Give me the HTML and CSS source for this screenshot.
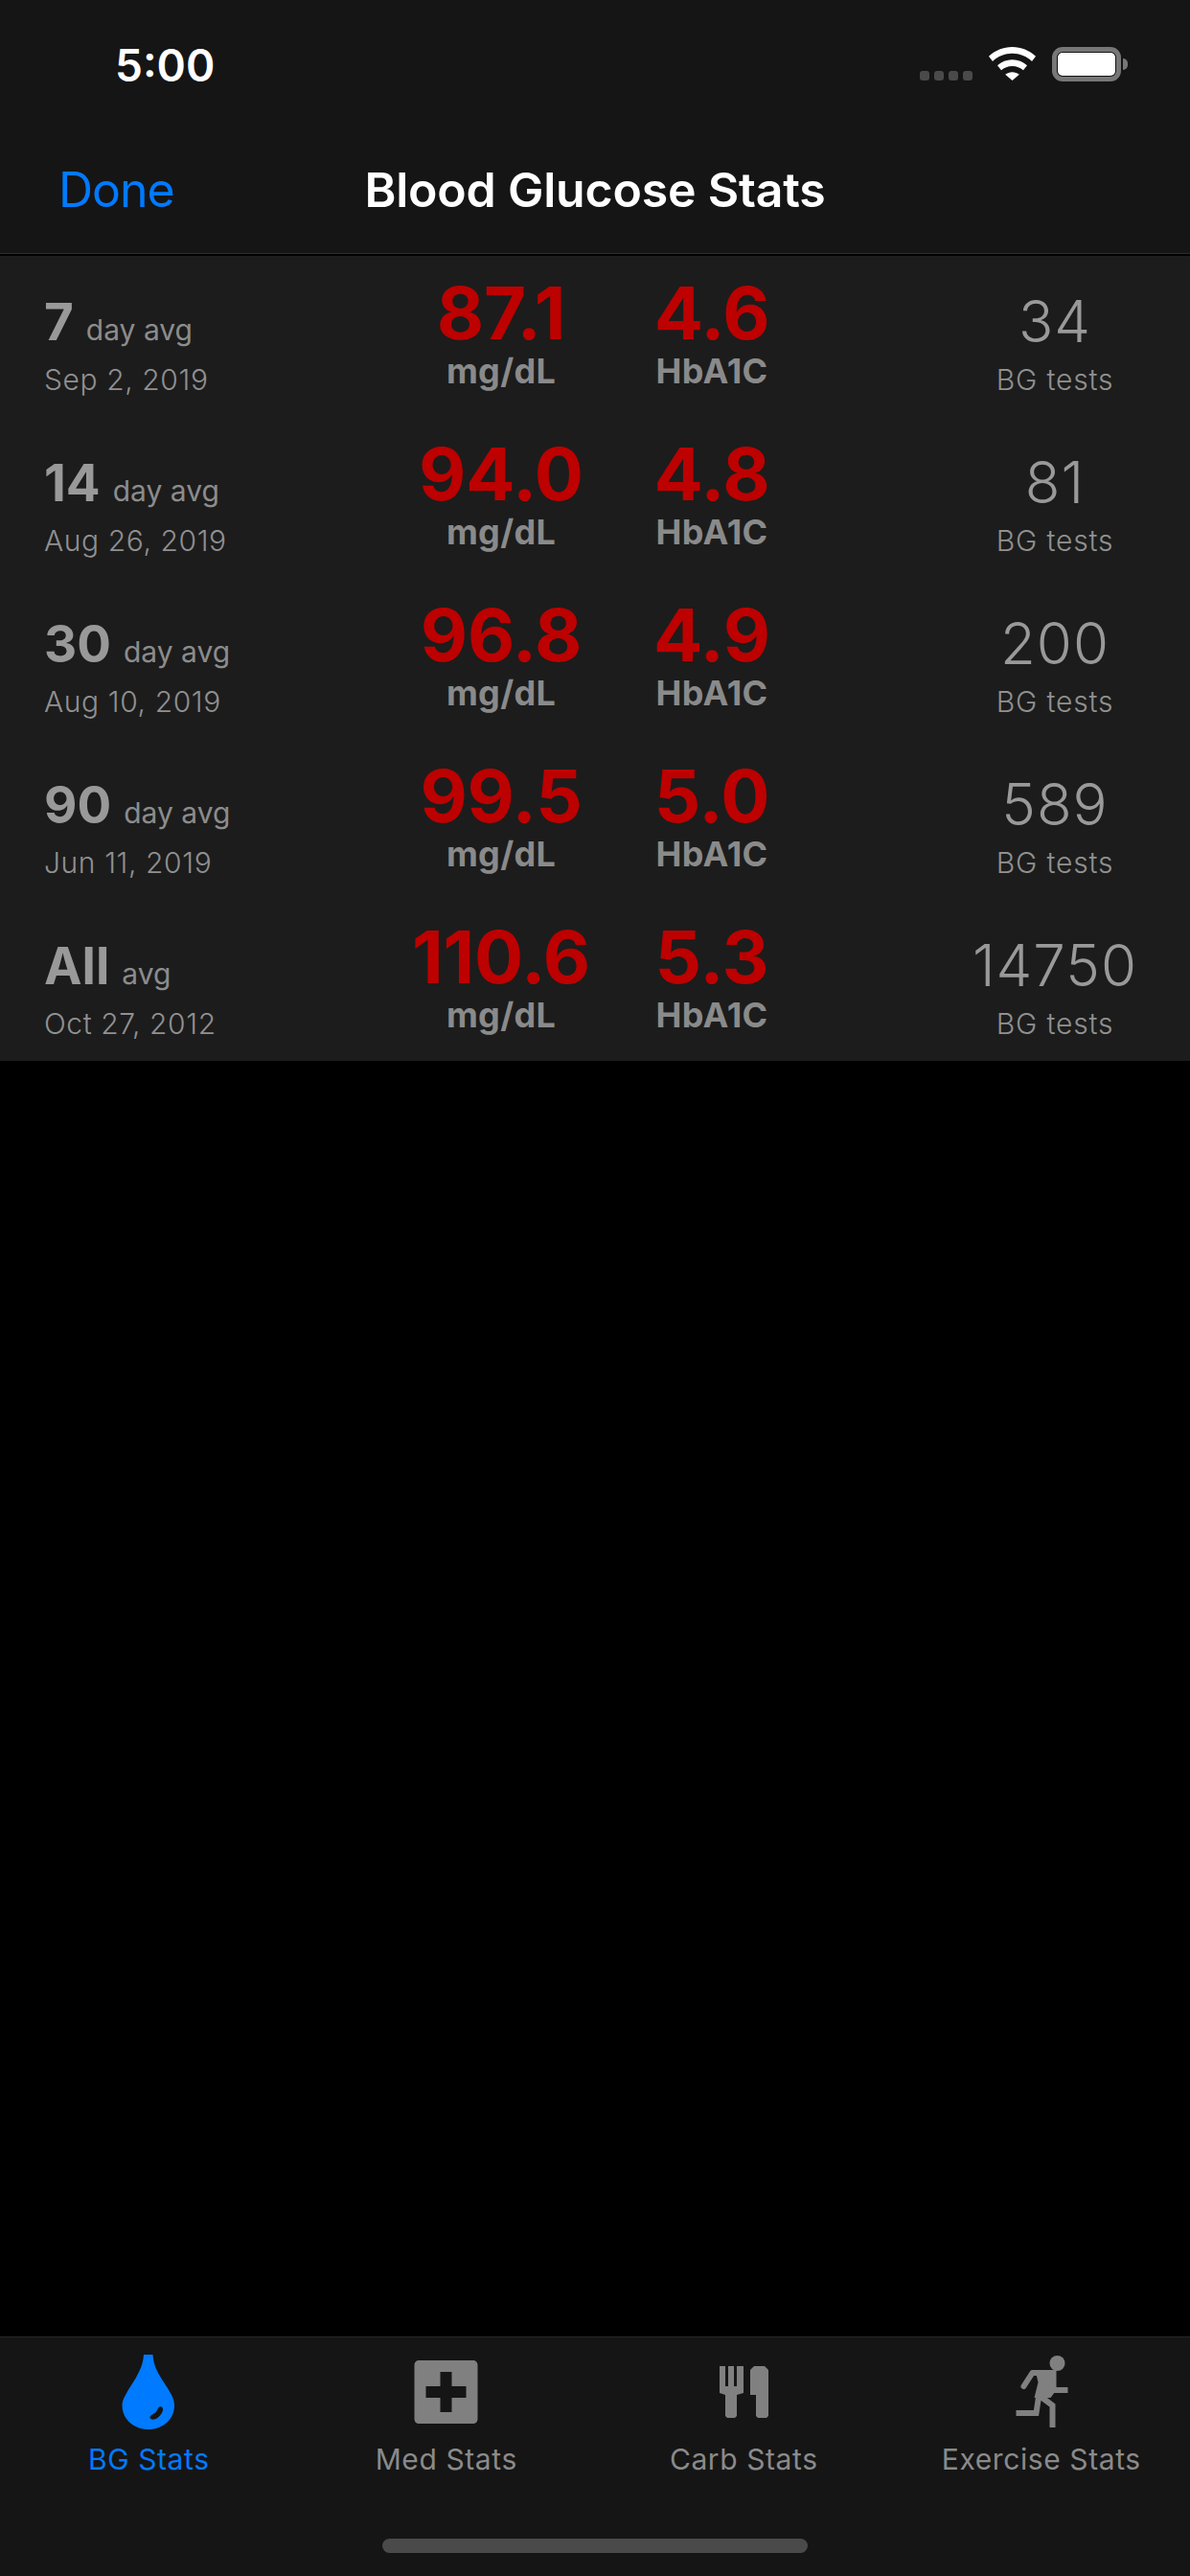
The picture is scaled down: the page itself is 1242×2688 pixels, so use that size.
FILE: index.html
```html
<!DOCTYPE html>
<html lang="en">
<head>
<meta charset="utf-8">
<title>Blood Glucose Stats</title>
<link rel="stylesheet" href="styles.css">
</head>
<body>
<div class="app">
  <header class="top">
    <div class="status">
      <span class="time">5:00</span>
      <div class="status-icons">
        <div class="dots"><i></i><i></i><i></i><i></i></div>
        <svg class="wifi" width="49" height="35" viewBox="0 0 49 35"><path fill="#fff" d="M24.5 0C33.8 0 42.3 3.6 49 9.7L45 14.9C39.5 9.9 32.3 6.8 24.5 6.8S9.500 9.900 4 14.900L0 9.700C6.700 3.600 15.200 0 24.500 0Z"/><path fill="#fff" d="M24.500 13.300C30.400 13.300 35.800 15.500 40 19.300L36 24.300C33 21.500 29 19.900 24.500 19.900S16 21.500 13 24.300L9 19.300C13.200 15.500 18.600 13.300 24.500 13.300Z"/><path fill="#fff" d="M24.500 26.300C27.200 26.300 29.700 27.200 31.800 28.700L24.500 35 17.200 28.700C19.300 27.200 21.800 26.300 24.500 26.300Z"/></svg>
        <div class="battery"><div class="battery-body"><div class="battery-fill"></div></div><div class="battery-cap"></div></div>
      </div>
    </div>
    <nav class="nav">
      <span class="done">Done</span>
      <span class="title">Blood Glucose Stats</span>
    </nav>
  </header>

  <section class="stats">
    <div class="row">
      <div class="period"><div class="period-line"><b>7</b><span>day avg</span></div><div class="date">Sep 2, 2019</div></div>
      <div class="metric"><div class="value">87.1</div><div class="unit">mg/dL</div></div>
      <div class="metric"><div class="value">4.6</div><div class="unit">HbA1C</div></div>
      <div class="tests"><div class="count">34</div><div class="count-label">BG tests</div></div>
    </div>
    <div class="row">
      <div class="period"><div class="period-line"><b>14</b><span>day avg</span></div><div class="date">Aug 26, 2019</div></div>
      <div class="metric"><div class="value">94.0</div><div class="unit">mg/dL</div></div>
      <div class="metric"><div class="value">4.8</div><div class="unit">HbA1C</div></div>
      <div class="tests"><div class="count">81</div><div class="count-label">BG tests</div></div>
    </div>
    <div class="row">
      <div class="period"><div class="period-line"><b>30</b><span>day avg</span></div><div class="date">Aug 10, 2019</div></div>
      <div class="metric"><div class="value">96.8</div><div class="unit">mg/dL</div></div>
      <div class="metric"><div class="value">4.9</div><div class="unit">HbA1C</div></div>
      <div class="tests"><div class="count">200</div><div class="count-label">BG tests</div></div>
    </div>
    <div class="row">
      <div class="period"><div class="period-line"><b>90</b><span>day avg</span></div><div class="date">Jun 11, 2019</div></div>
      <div class="metric"><div class="value">99.5</div><div class="unit">mg/dL</div></div>
      <div class="metric"><div class="value">5.0</div><div class="unit">HbA1C</div></div>
      <div class="tests"><div class="count">589</div><div class="count-label">BG tests</div></div>
    </div>
    <div class="row">
      <div class="period"><div class="period-line"><b>All</b><span>avg</span></div><div class="date">Oct 27, 2012</div></div>
      <div class="metric"><div class="value">110.6</div><div class="unit">mg/dL</div></div>
      <div class="metric"><div class="value">5.3</div><div class="unit">HbA1C</div></div>
      <div class="tests"><div class="count">14750</div><div class="count-label">BG tests</div></div>
    </div>
  </section>

  <div class="spacer"></div>

  <footer class="tabbar">
    <div class="tabs">
      <div class="tab active">
        <svg class="tab-icon" viewBox="95 2440 120 100"><path fill="#007aff" fill-rule="evenodd" d="M150 2457H159.500C160 2464 161.500 2469 164.500 2475C169 2484 175 2491 179.500 2500C181 2503.500 182 2506.500 182 2510C182 2524.500 170 2535 155 2535C140 2535 127.500 2524.500 127.500 2510C127.500 2506.500 128.500 2503.500 130.500 2500C135 2491 141 2484 145 2475C148 2469 149.500 2464 150 2457ZM168.500 2511.500C170.500 2512.500 170.500 2515.500 168.500 2518.500C166 2522.500 161.500 2525.500 158.500 2524.500C155.500 2523.500 156 2521 159 2519.500C162.500 2518 164 2515.500 165 2513C165.800 2511.500 167 2510.800 168.500 2511.500Z"/></svg>
        <span>BG Stats</span>
      </div>
      <div class="tab">
        <svg class="tab-icon" viewBox="405.500 2440 120 100"><path fill="#808080" fill-rule="evenodd" d="M437 2463H493C496 2463 498 2465 498 2468V2524C498 2527 496 2529 493 2529H437C434 2529 432 2527 432 2524V2468C432 2465 434 2463 437 2463ZM459 2475V2490H444V2502H459V2517H471V2502H486V2490H471V2475Z"/></svg>
        <span>Med Stats</span>
      </div>
      <div class="tab">
        <svg class="tab-icon" viewBox="716 2440 120 100"><path fill="#808080" d="M751 2469H757V2490H760V2469H766V2490H769V2469H776V2497L769 2499V2521L767 2523H759L757 2521V2499L751 2497Z"/><path fill="#808080" d="M787 2469H798L802 2473V2521L800 2523H791L789 2521V2499H783V2473Z"/></svg>
        <span>Carb Stats</span>
      </div>
      <div class="tab">
        <svg class="tab-icon" viewBox="1026.500 2440 120 100"><circle cx="1103" cy="2466" r="8" fill="#808080"/><path fill="none" stroke="#808080" stroke-width="6" stroke-linejoin="round" stroke-linecap="round" d="M1068 2490L1077 2476H1098"/><path fill="#808080" d="M1080 2473H1102V2494L1096 2502L1079 2502L1083 2486Z"/><path fill="none" stroke="#808080" stroke-width="6" d="M1098 2494H1114M1084 2498L1081 2518H1060M1086 2501L1098 2510V2533"/></svg>
        <span>Exercise Stats</span>
      </div>
    </div>
    <div class="home-bar"></div>
  </footer>
</div>
</body>
</html>
```
FILE: styles.css
```css
* { box-sizing: border-box; }
html, body { margin: 0; padding: 0; background: #000; }
.app {
  width: 1242px;
  height: 2688px;
  display: flex;
  flex-direction: column;
  background: #000;
  font-family: Inter, "Liberation Sans", sans-serif;
  overflow: hidden;
}
.top {
  height: 265px;
  background: #151515;
  border-bottom: 1px solid #2c2c2c;
  margin-bottom: 2px;
}
.status {
  height: 132px;
  display: flex;
  align-items: flex-start;
  justify-content: space-between;
  padding: 0 65px 0 120px;
}
.time {
  color: #fff;
  font-size: 46px;
  font-weight: 600;
  line-height: 56px;
  margin-top: 40px;
}
.status-icons {
  display: flex;
  align-items: flex-end;
  margin-top: 49px;
  height: 36px;
}
.dots { display: flex; gap: 5px; margin-right: 17px; padding-bottom: 1px; }
.dots i { display: block; width: 10px; height: 10px; border-radius: 3px; background: #4a4a4a; }
.wifi { display: block; margin-right: 17px; margin-bottom: 1px; }
.battery { display: flex; align-items: center; height: 36px; }
.battery-body {
  width: 72px;
  height: 36px;
  border: 5px solid #777;
  border-radius: 11px;
  padding: 1px;
  background: #111;
}
.battery-fill { width: 100%; height: 100%; background: #fff; border-radius: 5px; }
.battery-cap { width: 5px; height: 12px; margin-left: 2px; background: #777; border-radius: 0 6px 6px 0; }
.nav {
  height: 132px;
  display: grid;
  grid-template-columns: 1fr auto 1fr;
  align-items: start;
  padding: 0 61px;
}
.done {
  color: #007aff;
  font-size: 50px;
  line-height: 58px;
  margin-top: 37px;
  letter-spacing: -1px;
}
.title {
  color: #fff;
  font-size: 50px;
  font-weight: 600;
  line-height: 58px;
  margin-top: 37px;
  letter-spacing: -0.2px;
}
.stats { background: #1c1c1c; }
.row {
  height: 168px;
  display: grid;
  grid-template-columns: 366px 220px 220px 390px;
  padding-left: 46px;
}
.period { padding-top: 34px; color: #8c8c8c; }
.period-line { display: flex; align-items: baseline; gap: 13px; height: 70px; }
.period-line b { font-size: 53px; font-weight: 700; line-height: 70px; color: #999; }
.period-line span { font-size: 30px; line-height: 70px; font-weight: 400; }
.date { font-size: 30px; line-height: 36px; font-weight: 300; margin-top: 7px; letter-spacing: 0.6px; color: #909090; }
.metric { text-align: center; padding-top: 24px; padding-left: 2px; }
.value { color: #bd0000; font-size: 76px; font-weight: 700; line-height: 70px; letter-spacing: -0.2px; }
.unit { color: #8a8a8a; font-size: 36px; font-weight: 700; line-height: 40px; margin-top: 6px; letter-spacing: 0.3px; }
.tests { text-align: center; padding-left: 108px; padding-top: 33px; color: #999; }
.count { font-size: 60px; font-weight: 300; line-height: 70px; letter-spacing: 1px; }
.count-label { font-size: 30px; font-weight: 300; line-height: 36px; margin-top: 8px; color: #909090; letter-spacing: 0.8px; }
.spacer { flex: 1; }
.tabbar {
  height: 250px;
  background: #151515;
  border-top: 1px solid #262626;
  display: flex;
  flex-direction: column;
}
.tabs { display: grid; grid-template-columns: repeat(4, 1fr); }
.tab { display: flex; flex-direction: column; align-items: center; color: #8a8a8a; font-size: 30px; line-height: 36px; letter-spacing: 0.6px; }
.tab.active { color: #007aff; }
.tab-icon { display: block; width: 120px; height: 100px; margin-top: 1px; }
.tab span { margin-top: 8px; }
.home-bar {
  width: 444px;
  height: 15px;
  border-radius: 8px;
  background: #4a4a4a;
  margin: 65px auto 0;
}
```
